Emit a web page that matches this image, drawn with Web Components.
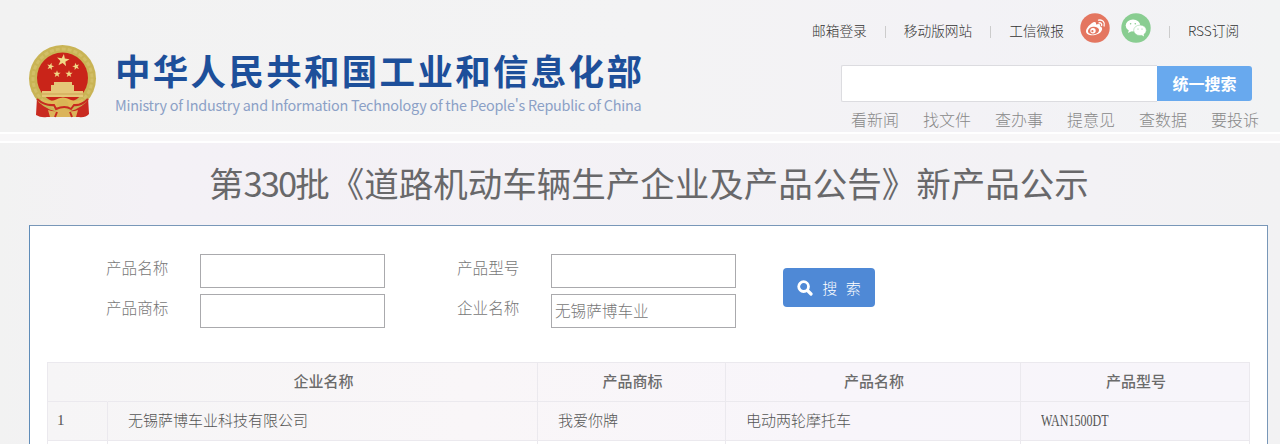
<!DOCTYPE html>
<html lang="zh-CN">
<head>
<meta charset="utf-8">
<title>新产品公示</title>
<style>
  body {
    margin: 0;
    height: 444px;
    overflow: hidden;
    background: #fff;
    color: #777;
    font: 15px/20px "Noto Sans CJK SC", sans-serif;
    --line: #ebe9ee;
    --blue: #4f89d6;
  }
</style>
</head>
<body>
<site-header>
  <site-brand slot="brand" name="中华人民共和国工业和信息化部">Ministry of Industry and Information Technology of the People's Republic of China</site-brand>
  <top-links slot="links"></top-links>
  <site-search slot="search" label="统一搜索"></site-search>
  <quick-links slot="quick" items="看新闻,找文件,查办事,提意见,查数据,要投诉"></quick-links>
</site-header>
<notice-page>
  <span slot="title">第<span style="letter-spacing:-1.9px">330</span>批《道路机动车辆生产企业及产品公告》新产品公示</span>
  <search-form>
    <form-field label="产品名称"></form-field>
    <form-field label="产品型号"></form-field>
    <form-field label="产品商标"></form-field>
    <form-field label="企业名称" value="无锡萨博车业"></form-field>
    <search-button slot="action">搜 索</search-button>
  </search-form>
  <product-table></product-table>
</notice-page>

<script>
const define = (name, render) => {
  customElements.define(name, class extends HTMLElement {
    constructor() {
      super();
      this.attachShadow({ mode: 'open' });
    }
    connectedCallback() {
      this.shadowRoot.innerHTML = render(this);
    }
  });
};

/* page header: brand on the left, tools on the right */
define('site-header', () => `
  <style>
    :host {
      display: flex;
      justify-content: space-between;
      box-sizing: border-box;
      height: 132px;
      background: linear-gradient(90deg, #f2f2f2, #f3f3f4 50%, #f3f2f6 75%, #f2f3f4);
    }
    .tools { width: 468px; }
  </style>
  <slot name="brand"></slot>
  <div class="tools">
    <slot name="links"></slot>
    <slot name="search"></slot>
    <slot name="quick"></slot>
  </div>
`);

const star = (x, y, r, turn = 0) => {
  const pts = [...Array(10)].map((_, i) => {
    const a = (i * 36 - 90 + turn) * Math.PI / 180;
    const d = i % 2 ? r * 0.4 : r;
    return `${(x + d * Math.cos(a)).toFixed(2)},${(y + d * Math.sin(a)).toFixed(2)}`;
  });
  return `<polygon points="${pts.join(' ')}" fill="#f0d987"/>`;
};

define('site-brand', el => `
  <style>
    :host { display: flex; padding: 44px 0 0 28px; }
    svg { width: 70px; height: 75px; }
    .names { margin: 6px 0 0 17px; white-space: nowrap; }
    .cn {
      font-size: 35.5px;
      line-height: 40px;
      font-weight: 700;
      letter-spacing: 2.3px;
      color: #1d4f9a;
    }
    .en { margin-top: 7px; font-size: 14.4px; line-height: 16px; letter-spacing: -.24px; color: #8ba0c6; }
  </style>
  <svg viewBox="0 0 70 75">
    <path d="M9 53 L8 71 Q13 74 19 73 L51 73 Q57 74 61 70 L60 53Z" fill="#c92a20"/>
    <circle cx="34.5" cy="34.5" r="33.5" fill="#c9b455"/>
    <circle cx="34.5" cy="34.5" r="29.5" fill="none" stroke="#d2be66" stroke-width="3" stroke-dasharray="4 2"/>
    <circle cx="34.5" cy="34" r="25.5" fill="#c92419"/>
    ${star(35, 16.5, 6.6, 8)}${star(22.5, 22.5, 3.8, 15)}${star(48, 22.5, 3.8, -15)}${star(29, 30, 3.8)}${star(41, 30, 3.8)}
    <path d="M26 38h18v3h2v6h9v6H14v-6h9v-6h3z" fill="#e5c778"/>
    <path d="M14 50h42" stroke="#cda352"/>
    <path d="M14 55 Q23 58 27 56 Q35 51 43 56 Q48 58 56 55 L51 61 Q45 59 42 63 H28 Q24 59 19 61Z" fill="#e0b956"/>
    <circle cx="34.5" cy="61" r="6" fill="#d9b655"/>
    <path d="M9 55q8 7 17 6l2 4q9-4 15 0l3-4q7 1 14-6" fill="none" stroke="#c92a20" stroke-width="2"/>
    <path d="M20 66q6 2 8 1 7-4 14 0 3 1 8-1l-2 7H22z" fill="#dbb45a"/>
    <path d="M29 68l-2 5m15-5 2 5" stroke="#c92a20" stroke-width="2"/>
  </svg>
  <div class="names">
    <div class="cn">${el.getAttribute('name')}</div>
    <div class="en"><slot></slot></div>
  </div>
`);

define('top-links', () => `
  <style>
    :host {
      display: flex;
      align-items: center;
      height: 56px;
      font-size: 13.7px;
      font-weight: 300;
      color: #333;
      white-space: nowrap;
    }
    a { margin-top: 4px; }
    i { width: 1px; height: 12px; margin: 7px 18px 0; background: #ccc; }
    svg { width: 30px; height: 30px; }
    .weibo { margin-left: 16px; }
    .wechat { margin-left: 11px; }
  </style>
  <a>邮箱登录</a><i></i><a>移动版网站</a><i></i><a>工信微报</a>
  <svg class="weibo" viewBox="0 0 30 30">
    <circle cx="15" cy="15" r="14.7" fill="#e47660"/>
    <path d="M13 9.5c2-1 3.5-.3 3 2 3-1.2 5-.5 4 1.8 2.2.7 2.7 2.5 1.6 4.5-2.6 5.5-15.6 6.2-15.6.5C6 15 10.5 10.7 13 9.5z" fill="#fff"/>
    <ellipse cx="13.5" cy="17.6" rx="5.6" ry="3.8" transform="rotate(-8 13.5 17.6)" fill="#e47660"/>
    <circle cx="13" cy="17.8" r="2.7" fill="#fff"/>
    <circle cx="12.4" cy="18.2" r="1.1" fill="#e47660"/>
    <path d="M18.5 7.2c4-.9 6.8 2 5.6 5.8M19 9.8c1.9-.3 3.1.9 2.6 2.7" fill="none" stroke="#fff" stroke-width="1.3" stroke-linecap="round"/>
  </svg>
  <svg class="wechat" viewBox="0 0 30 30">
    <circle cx="15" cy="15" r="14.7" fill="#89cd91"/>
    <ellipse cx="12" cy="12.5" rx="7.3" ry="6" fill="#fff"/>
    <path d="M8 16.5l-1 3.5 4-2z" fill="#fff"/>
    <ellipse cx="19" cy="17.3" rx="6.3" ry="5.2" fill="#fff" stroke="#89cd91" stroke-width=".5"/>
    <path d="M20 21.5l3 2-.5-3z" fill="#fff"/>
    <g fill="#89cd91"><circle cx="9.6" cy="10.8" r=".8"/><circle cx="14.3" cy="10.8" r=".8"/><circle cx="17" cy="16" r=".6"/><circle cx="21" cy="16" r=".6"/></g>
  </svg>
  <i></i><a>RSS订阅</a>
`);

define('site-search', el => `
  <style>
    :host { display: flex; height: 37px; margin: 9px 28px 0 29px; }
    .box { flex: 1; box-sizing: border-box; border: 1px solid #dcdce0; border-right: 0; border-radius: 2px 0 0 2px; background: #fff; }
    button {
      width: 95px;
      height: 35px;
      margin-top: 1px;
      padding: 0;
      border: 0;
      border-radius: 0 3px 3px 0;
      background: #68a9ee;
      color: #fff;
      font: 700 16px/35px "Noto Sans CJK SC", sans-serif;
    }
  </style>
  <div class="box"></div><button>${el.getAttribute('label')}</button>
`);

define('quick-links', el => `
  <style>
    :host { display: flex; gap: 24px; padding: 7px 0 0 39px; font-size: 16px; line-height: 20px; font-weight: 300; color: #888; }
    a { width: 48px; white-space: nowrap; }
  </style>
  ${el.getAttribute('items').split(',').map(t => `<a>${t}</a>`).join('')}
`);

define('notice-page', () => `
  <style>
    :host { display: block; }
    .rule { height: 7px; margin: 2px 0; background: #f8f7f8; }
    .page { padding: 0 12px 0 29px; background: linear-gradient(90deg, #f2f2f2, #f4f1f6 12%, #f3f2f5 85%, #f2f2f3); }
    h1 {
      margin: 0;
      height: 82px;
      padding-left: 180px;
      font-size: 34.5px;
      line-height: 79px;
      font-weight: 400;
      color: #68686a;
      white-space: nowrap;
    }
    .panel { box-sizing: border-box; height: 219px; border: 1px solid #7897b8; border-left-color: #5f8cb8; border-bottom: 0; background: #fff; }
  </style>
  <div class="rule"></div>
  <div class="page">
    <h1><slot name="title"></slot></h1>
    <div class="panel"><slot></slot></div>
  </div>
`);

define('search-form', () => `
  <style>
    :host { display: flex; padding: 28px 0 0 76px; height: 108px; }
    .fields { display: grid; grid-template-columns: 279px 279px; grid-auto-rows: 34px; gap: 6px 72px; }
    .action { margin: 14px 0 0 47px; }
  </style>
  <div class="fields"><slot></slot></div>
  <div class="action"><slot name="action"></slot></div>
`);

define('form-field', el => `
  <style>
    :host { display: flex; justify-content: space-between; font-size: 15.6px; font-weight: 300; }
    label { line-height: 27px; white-space: nowrap; }
    input {
      box-sizing: border-box;
      width: 185px;
      height: 34px;
      padding: 0 3px 3px;
      border: 1px solid #aaaaad;
      background: #fff;
      color: #777;
      font: inherit;
      outline: 0;
    }
  </style>
  <label>${el.getAttribute('label')}</label>
  <input value="${el.getAttribute('value') || ''}">
`);

define('search-button', () => `
  <style>
    :host {
      display: flex;
      align-items: center;
      justify-content: center;
      gap: 9px;
      width: 92px;
      height: 39px;
      border-radius: 4px;
      background: var(--blue);
      color: #fff;
      font-size: 15px;
      font-weight: 300;
      word-spacing: 5px;
    }
    svg { width: 16px; height: 16px; }
  </style>
  <svg viewBox="0 0 16 16" fill="none" stroke="#fff" stroke-linecap="round">
    <circle cx="6.6" cy="6.6" r="4.9" stroke-width="2.8"/>
    <path d="M10.5 10.5l3.5 3.5" stroke-width="3.2"/>
  </svg>
  <span><slot></slot></span>
`);

define('product-table', () => {
  const heads = ['', '企业名称', '产品商标', '产品名称', '产品型号'];
  const row = ['1', '无锡萨博车业科技有限公司', '我爱你牌', '电动两轮摩托车', '<span class="model">WAN1500DT</span>'];
  return `
  <style>
    :host { display: block; margin: 0 17px; }
    .grid {
      display: grid;
      grid-template-columns: 60px 430px 188px 295px 1fr;
      grid-template-rows: 39px 39px 3px;
      border-left: 1px solid var(--line);
      border-top: 1px solid var(--line);
      background: linear-gradient(90deg, #f6f5f6, #f9f6f8 35%, #f8f5fa 65%, #f7f5fa);
    }
    .grid > div {
      box-sizing: border-box;
      padding: 0 20px;
      border-right: 1px solid var(--line);
      border-bottom: 1px solid var(--line);
      line-height: 35px;
      white-space: nowrap;
      font-weight: 300;
      color: #555;
    }
    .grid > .th { padding-left: 22px; text-align: center; font-weight: 500; color: #6b6b6b; }
    .grid > .th:first-child { border-right-color: transparent; }
    .grid > .num { padding-left: 9px; font-family: "Liberation Serif", serif; line-height: 37px; }
    .grid > .next { background: #fff; border-bottom: 0; }
    .model { display: inline-block; height: 20px; font: 16.5px/20px "Liberation Serif", serif; transform: scaleX(.73); transform-origin: left; }
  </style>
  <div class="grid">
    ${heads.map(t => `<div class="th">${t}</div>`).join('')}
    ${row.map((t, i) => `<div class="${i ? '' : 'num'}">${t}</div>`).join('')}
    ${heads.map(() => '<div class="next"></div>').join('')}
  </div>`;
});
</script>
</body>
</html>
